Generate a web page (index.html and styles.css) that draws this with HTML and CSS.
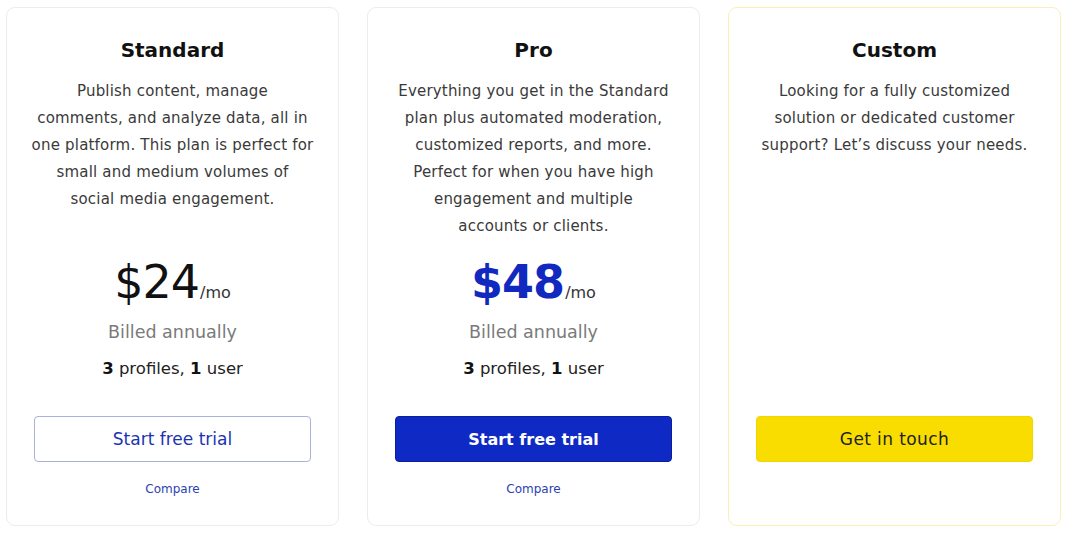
FILE: index.html
```html
<!DOCTYPE html>
<html lang="en">
<head>
<meta charset="utf-8">
<title>Pricing</title>
<link rel="stylesheet" href="styles.css">
</head>
<body>
<main class="plans">
  <section class="card">
    <h2 class="title">Standard</h2>
    <p class="desc">Publish content, manage<br>comments, and analyze data, all in<br>one platform. This plan is perfect for<br>small and medium volumes of<br>social media engagement.</p>
    <div class="price"><span class="amount">$24</span><span class="per">/mo</span></div>
    <p class="billed">Billed annually</p>
    <p class="limits"><b>3</b> profiles, <b>1</b> user</p>
    <div class="foot">
      <a class="btn btn-outline" href="#">Start free trial</a>
      <a class="compare" href="#">Compare</a>
    </div>
  </section>
  <section class="card">
    <h2 class="title">Pro</h2>
    <p class="desc">Everything you get in the Standard<br>plan plus automated moderation,<br>customized reports, and more.<br>Perfect for when you have high<br>engagement and multiple<br>accounts or clients.</p>
    <div class="price"><span class="amount amount-pro">$48</span><span class="per">/mo</span></div>
    <p class="billed">Billed annually</p>
    <p class="limits"><b>3</b> profiles, <b>1</b> user</p>
    <div class="foot">
      <a class="btn btn-primary" href="#">Start free trial</a>
      <a class="compare" href="#">Compare</a>
    </div>
  </section>
  <section class="card card-custom">
    <h2 class="title">Custom</h2>
    <p class="desc">Looking for a fully customized<br>solution or dedicated customer<br>support? Let’s discuss your needs.</p>
    <div class="foot">
      <a class="btn btn-yellow" href="#">Get in touch</a>
      <span class="compare compare-empty"></span>
    </div>
  </section>
</main>
</body>
</html>
```

FILE: styles.css
```css
* { box-sizing: border-box; }
html, body { margin: 0; padding: 0; background: #fff; }
body {
  font-family: "DejaVu Sans", "Open Sans", sans-serif;
  color: #333;
}
.plans {
  display: grid;
  grid-template-columns: repeat(3, 333px);
  column-gap: 28px;
  padding: 7px 9px 9px 6px;
  height: 535px;
}
.card {
  display: flex;
  flex-direction: column;
  align-items: center;
  border: 1px solid #ececec;
  border-radius: 9px;
  padding: 28px 18px 26px;
  text-align: center;
}
.card-custom { border-color: #fbefb8; }
.title {
  margin: 0;
  font-size: 20px;
  line-height: 28px;
  font-weight: 700;
  color: #111;
}
.desc {
  margin: 14px 0 0;
  font-size: 15px;
  letter-spacing: 0.2px;
  line-height: 27px;
  color: #3a3a3a;
  min-height: 162px;
  white-space: nowrap;
}
.price {
  margin-top: 14px;
  display: flex;
  align-items: baseline;
  justify-content: center;
  height: 56px;
  line-height: 56px;
}
.amount {
  font-size: 46px;
  font-weight: 400;
  color: #111;
  letter-spacing: -1px;
}
.amount-pro {
  font-weight: 700;
  color: #1229c0;
}
.per {
  font-size: 16px;
  color: #333;
  margin-left: 1px;
}
.billed {
  margin: 10px 0 0;
  font-size: 17.5px;
  line-height: 24px;
  color: #7a7a7a;
}
.limits {
  margin: 13px 0 0;
  font-size: 16.5px;
  line-height: 24px;
  color: #222;
}
.limits b { font-weight: 700; color: #111; }
.foot {
  margin-top: auto;
  width: 100%;
  padding: 0 9px;
  display: flex;
  flex-direction: column;
  align-items: center;
}
.btn {
  display: flex;
  align-items: center;
  justify-content: center;
  width: 100%;
  height: 46px;
  border-radius: 4px;
  font-size: 17px;
  text-decoration: none;
}
.btn-outline {
  border: 1px solid #aab2dc;
  color: #1a33b3;
  background: #fff;
}
.btn-primary {
  border: 1px solid #0a1f9c;
  background: #0f2ac4;
  color: #fff;
  font-weight: 700;
  font-size: 16px;
}
.btn-yellow {
  border: 1px solid #f2d600;
  background: #f9dd00;
  color: #222;
  letter-spacing: 0.4px;
}
.compare {
  margin-top: 17px;
  height: 20px;
  line-height: 20px;
  font-size: 12px;
  color: #2a3fb0;
  text-decoration: none;
}
.compare-empty { display: block; }
```
